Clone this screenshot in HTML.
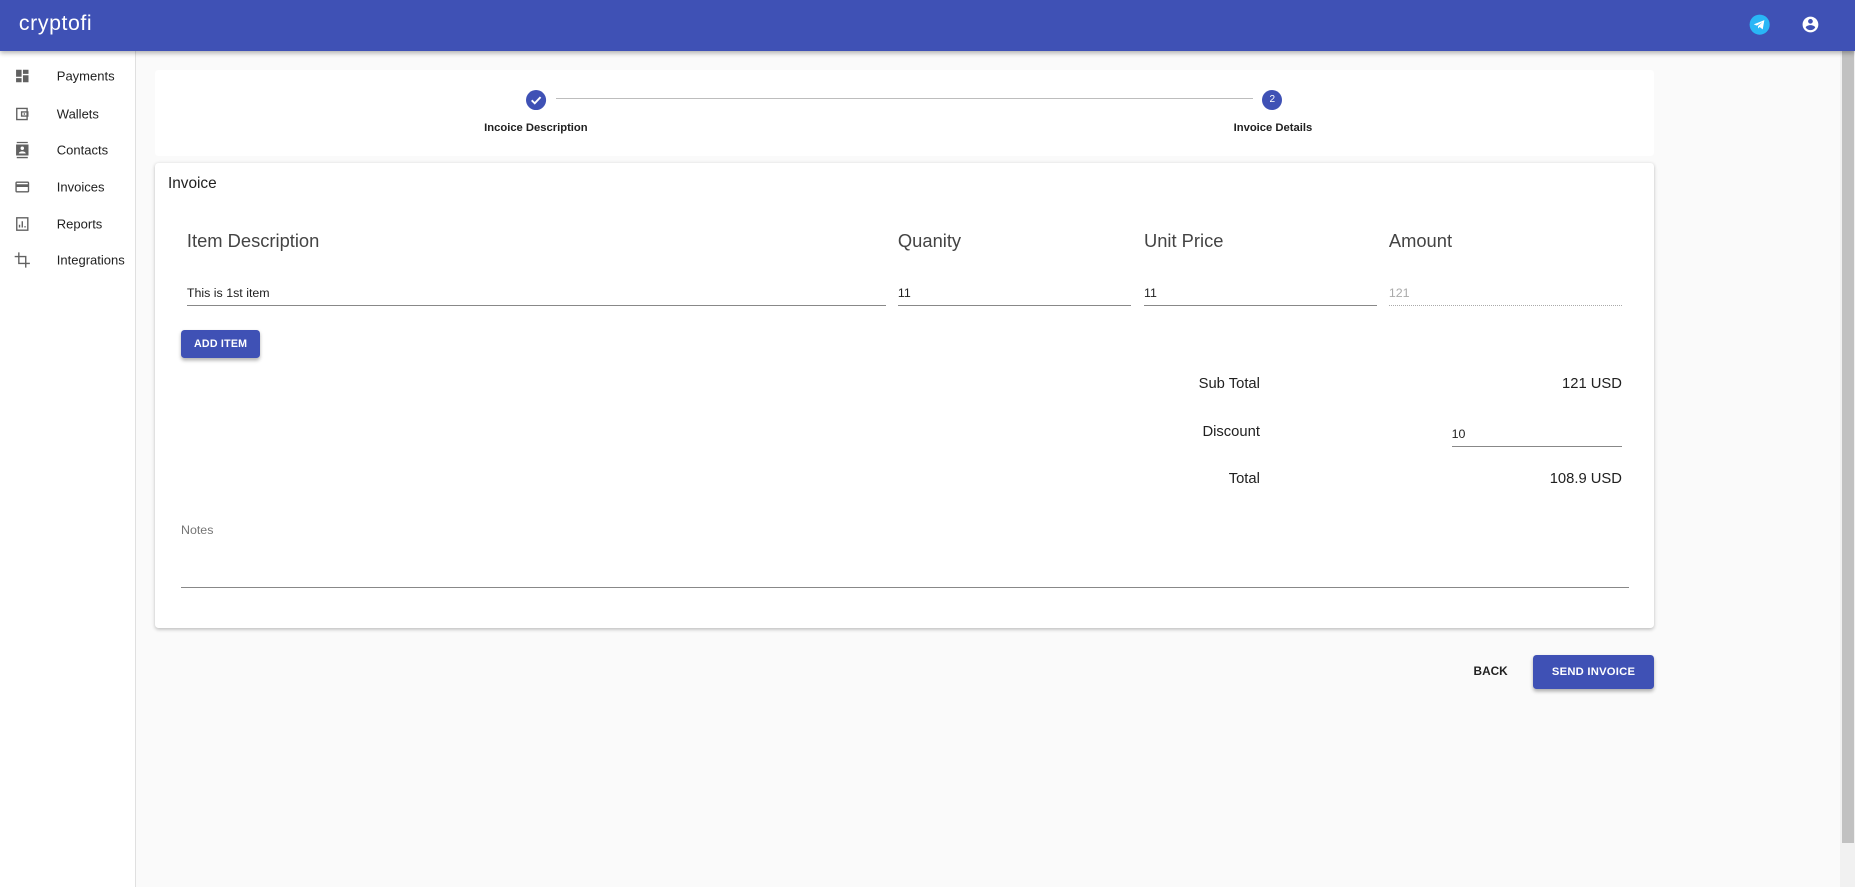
<!DOCTYPE html>
<html><head><meta charset="utf-8"><style>
html,body{margin:0;padding:0;overflow:hidden;width:1855px;height:887px;background:#fafafa}
#w{zoom:1.18304;width:1568px;height:750px;position:relative;font-family:"Liberation Sans",Roboto,sans-serif;color:#212121}
.a{position:absolute}
.hdr{left:0;top:0;width:1568px;height:43px;background:#3f51b5;box-shadow:0 2px 4px rgba(0,0,0,.3);z-index:2}
.side{left:0;top:43px;width:114px;height:707px;background:#fff;border-right:1px solid #e0e0e0}
.it{position:absolute;left:48px;font-size:11px;transform:translateY(-50%)}
.ic{position:absolute;left:12px;width:14px;height:14px;transform:translateY(-50%)}
.card{background:#fff;left:131px;width:1267px;border-radius:3px}
.th{font-size:15.5px;color:#444;transform:translateY(-50%)}
.v{font-size:10.5px;transform:translateY(-50%)}
.ul{height:1px;background:#888}
.btn{background:#3f51b5;color:#fff;font-size:9px;font-weight:bold;letter-spacing:.2px;border-radius:3px;box-shadow:0 2px 3px rgba(0,0,0,.3);display:flex;align-items:center;justify-content:center}
.r{font-size:12.5px;text-align:right;transform:translateY(-50%)}
</style></head><body><div id="w">
<div class="a hdr">
 <div class="a" style="left:16px;top:9px;color:#fff;font-size:18px;letter-spacing:.5px">cryptofi</div>
 <svg class="a" style="left:1478px;top:12px" width="18" height="18" viewBox="0 0 18 18"><circle cx="9" cy="9" r="8.5" fill="#29b6f6"/><path d="M4 8.8 13 5.2 11.6 13 9 11 7.6 12.3 7.7 10.2 11.5 6.8 6.7 9.8z" fill="#fff"/></svg>
 <svg class="a" style="left:1522px;top:13px" width="16" height="16" viewBox="0 0 24 24"><path fill="#fff" d="M12 2C6.48 2 2 6.48 2 12s4.48 10 10 10 10-4.480 10-10S17.52 2 12 2zm0 3c1.660 0 3 1.34 3 3s-1.34 3-3 3-3-1.34-3-3 1.34-3 3-3zm0 14.2c-2.5 0-4.71-1.28-6-3.22.03-1.99 4-3.08 6-3.080 1.99 0 5.97 1.09 6 3.08-1.29 1.94-3.5 3.22-6 3.22z"/></svg>
</div>
<div class="a side">
 <svg class="ic" style="top:21px" viewBox="0 0 24 24"><path fill="#616161" d="M3 13h8V3H3v10zm0 8h8v-6H3v6zm10 0h8V11h-8v10zm0-18v6h8V3h-8z"/></svg><div class="it" style="top:21px">Payments</div>
 <svg class="ic" style="top:53px" viewBox="0 0 24 24"><path fill="none" stroke="#616161" stroke-width="2" d="M4 4h15v16H4zM11 9h9v6h-9z"/><circle cx="15" cy="12" r="1.2" fill="#616161"/></svg><div class="it" style="top:53px">Wallets</div>
 <svg class="ic" style="top:84px" viewBox="0 0 24 24"><path fill="#616161" d="M4 0h16v2H4zm0 22h16v2H4zM3 4h18v16H3zm9 3a2.5 2.5 0 100 5 2.5 2.5 0 000-5zm-5 10h10c0-2-3-3-5-3s-5 1-5 3z"/></svg><div class="it" style="top:84px">Contacts</div>
 <svg class="ic" style="top:115px" viewBox="0 0 24 24"><path fill="#616161" d="M20 4H4c-1.1 0-2 .9-2 2v12c0 1.1.9 2 2 2h16c1.1 0 2-.9 2-2V6c0-1.1-.9-2-2-2zm0 14H4v-6h16v6zm0-10H4V6h16v2z"/></svg><div class="it" style="top:115px">Invoices</div>
 <svg class="ic" style="top:146px" viewBox="0 0 24 24"><path fill="none" stroke="#616161" stroke-width="2" d="M4 3h16v18H4z"/><path stroke="#616161" stroke-width="2" d="M8 17v-4M12 17V8M16 17v-2"/></svg><div class="it" style="top:146px">Reports</div>
 <svg class="ic" style="top:177px" viewBox="0 0 24 24"><path fill="none" stroke="#616161" stroke-width="2" d="M7 1v16h16M1 7h16v16"/></svg><div class="it" style="top:177px">Integrations</div>
</div>
<div class="a" style="left:1555px;top:43px;width:13px;height:707px;background:#f1f1f1"></div>
<div class="a" style="left:1557px;top:43px;width:10px;height:670px;background:#c1c1c1"></div>

<div class="a card" style="top:59px;height:73px">
 <svg class="a" style="left:314px;top:17px" width="17" height="17" viewBox="0 0 17 17"><circle cx="8.5" cy="8.5" r="8.5" fill="#3f51b5"/><path d="M4.8 8.7 7.4 11.2 12.3 6" stroke="#fff" stroke-width="1.6" fill="none"/></svg>
 <div class="a" style="left:339px;top:24px;width:589px;height:1px;background:#bdbdbd"></div>
 <div class="a" style="left:936px;top:17px;width:17px;height:17px;border-radius:50%;background:#3f51b5;color:#fff;font-size:8.5px;display:flex;align-items:center;justify-content:center">2</div>
 <div class="a" style="left:222px;top:44px;width:200px;text-align:center;font-size:9.5px;font-weight:bold">Incoice Description</div>
 <div class="a" style="left:845px;top:44px;width:200px;text-align:center;font-size:9.5px;font-weight:bold">Invoice Details</div>
</div>

<div class="a card" style="top:138px;height:393px;box-shadow:0 1px 3px rgba(0,0,0,.25)">
 <div class="a" style="left:11px;top:10px;font-size:13px">Invoice</div>
</div>
<div class="a th" style="left:158px;top:204px">Item Description</div>
<div class="a th" style="left:759px;top:204px">Quanity</div>
<div class="a th" style="left:967px;top:204px">Unit Price</div>
<div class="a th" style="left:1174px;top:204px">Amount</div>
<div class="a v" style="left:158px;top:248px">This is 1st item</div>
<div class="a v" style="left:759px;top:248px">11</div>
<div class="a v" style="left:967px;top:248px">11</div>
<div class="a v" style="left:1174px;top:248px;color:#aaa">121</div>
<div class="a ul" style="left:158px;top:258px;width:591px"></div>
<div class="a ul" style="left:759px;top:258px;width:197px"></div>
<div class="a ul" style="left:967px;top:258px;width:197px"></div>
<div class="a" style="left:1174px;top:258px;width:197px;border-top:1px dotted #aaa"></div>
<div class="a btn" style="left:153px;top:279px;width:67px;height:24px">ADD ITEM</div>
<div class="a r" style="left:900px;width:165px;top:325px">Sub Total</div>
<div class="a r" style="left:1200px;width:171px;top:325px">121 USD</div>
<div class="a r" style="left:900px;width:165px;top:365px">Discount</div>
<div class="a v" style="left:1227px;top:367px">10</div>
<div class="a ul" style="left:1227px;top:377px;width:144px"></div>
<div class="a r" style="left:900px;width:165px;top:405px">Total</div>
<div class="a r" style="left:1200px;width:171px;top:405px">108.9 USD</div>
<div class="a" style="left:153px;top:442px;font-size:10.5px;color:#757575">Notes</div>
<div class="a ul" style="left:153px;top:496px;width:1224px"></div>

<div class="a" style="left:1240px;top:561px;width:40px;text-align:center;font-size:10px;font-weight:bold">BACK</div>
<div class="a btn" style="left:1296px;top:554px;width:102px;height:28px;font-size:9.5px">SEND INVOICE</div>
</div></body></html>
